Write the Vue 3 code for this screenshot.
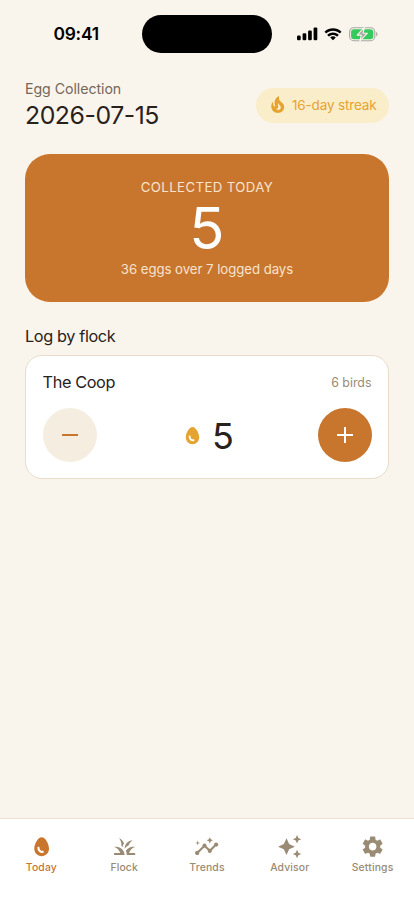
<script setup>
import { ref, computed } from 'vue'

const icons = {
  egg: 'M12 3C8.5 3 5 9.33 5 14c0 3.87 3.13 7 7 7s7-3.13 7-7c0-4.67-3.5-11-7-11zm1 15c-3 0-5-1.99-5-5 0-.55.45-1 1-1s1 .45 1 1c0 2.92 2.42 3 3 3 .55 0 1 .45 1 1s-.45 1-1 1z',
  grass: 'M12 20H2v-2h5.75C7.02 15.19 4.81 12.99 2 12.26 2.64 12.1 3.31 12 4 12c4.42 0 8 3.58 8 8zM22 12.26c-.64-.16-1.31-.26-2-.26-2.93 0-5.48 1.58-6.88 3.93.29.66.53 1.35.67 2.07.13.65.2 1.32.2 2h8v-2h-5.75c.74-2.81 2.95-5.01 5.76-5.74zM15.64 11.02c.78-2.09 2.23-3.84 4.09-5C15.44 6.16 12 9.67 12 14v.02c.95-1.27 2.2-2.3 3.64-3zM11.42 8.85C10.58 6.66 8.88 4.89 6.7 4 8.14 5.86 9 8.18 9 10.71c0 .21-.03.41-.04.61.43.24.83.52 1.22.82.11-1.14.55-2.25 1.24-3.29z',
  insights: 'M21 8c-1.45 0-2.26 1.44-1.93 2.51l-3.55 3.56c-.3-.09-.74-.09-1.04 0l-2.55-2.55C12.27 10.45 11.46 9 10 9c-1.45 0-2.27 1.44-1.93 2.52l-4.56 4.55C2.44 15.74 1 16.55 1 18c0 1.1.9 2 2 2 1.45 0 2.26-1.44 1.93-2.51l4.55-4.56c.3.09.74.09 1.04 0l2.55 2.55C12.73 16.55 13.54 18 15 18c1.45 0 2.27-1.44 1.93-2.52l3.56-3.55C21.56 12.26 23 11.45 23 10c0-1.1-.9-2-2-2zM15 9l.94-2.07L18 6l-2.06-.93L15 3l-.92 2.07L12 6l2.08.93zM3.5 11L4 9l2-.5L4 8l-.5-2L3 8l-2 .5L3 9z',
  sparkle: 'M19 9l1.25-2.75L23 5l-2.75-1.25L19 1l-1.25 2.75L15 5l2.75 1.25L19 9zm-7.5.5L9 4 6.5 9.5 1 12l5.5 2.5L9 20l2.5-5.5L17 12l-5.5-2.5zM19 15l-1.25 2.75L15 19l2.75 1.25L19 23l1.25-2.75L23 19l-2.75-1.25L19 15z',
  settings: 'M19.14 12.94c.04-.3.06-.61.06-.94 0-.32-.02-.64-.07-.94l2.03-1.58c.18-.14.23-.41.12-.61l-1.92-3.32c-.12-.22-.37-.29-.59-.22l-2.39.96c-.5-.38-1.03-.7-1.62-.94l-.36-2.54c-.04-.24-.24-.41-.48-.41h-3.84c-.24 0-.43.17-.47.41l-.36 2.54c-.59.24-1.13.57-1.62.94l-2.39-.96c-.22-.08-.47 0-.59.22L2.74 8.87c-.12.21-.08.47.12.61l2.03 1.58c-.05.3-.09.63-.09.94s.02.64.07.94l-2.03 1.58c-.18.14-.23.41-.12.61l1.92 3.32c.12.22.37.29.59.22l2.39-.96c.5.38 1.03.7 1.62.94l.36 2.54c.05.24.24.41.48.41h3.84c.24 0 .44-.17.47-.41l.36-2.54c.59-.24 1.13-.56 1.62-.94l2.39.96c.22.08.47 0 .59-.22l1.92-3.32c.12-.22.07-.47-.12-.61l-2.01-1.58zM12 15.6c-1.98 0-3.6-1.62-3.6-3.6s1.62-3.6 3.6-3.6 3.6 1.62 3.6 3.6-1.62 3.6-3.6 3.6z',
  fire: 'M19.48 12.35c-1.57-4.08-7.16-4.3-5.81-10.23.1-.44-.37-.78-.75-.55C9.29 3.71 6.68 8 8.87 13.62c.18.46-.36.89-.75.59-1.81-1.37-2-3.34-1.84-4.75.06-.52-.62-.77-.91-.34C4.69 10.16 4 11.84 4 14.37c.38 5.6 5.11 7.32 6.81 7.54 2.43.31 5.06-.14 6.95-1.87 2.08-1.93 2.84-5.01 1.72-7.69zm-9.28 5.03c1.44-.35 2.18-1.39 2.38-2.31.33-1.43-.96-2.83-.09-5.09.33 1.87 3.27 3.04 3.27 5.08.08 2.53-2.66 4.7-5.56 2.32z',
}

const tabs = [
  { label: 'Today', icon: 'egg' },
  { label: 'Flock', icon: 'grass' },
  { label: 'Trends', icon: 'insights' },
  { label: 'Advisor', icon: 'sparkle' },
  { label: 'Settings', icon: 'settings' },
]

const active = ref('Today')
const count = ref(5)
const total = computed(() => 31 + count.value)
</script>

<template>
  <div class="screen">
    <header class="status">
      <span class="clock">09:41</span>
      <div class="island"></div>
      <div class="indicators">
        <svg class="signal" viewBox="0 0 21 14">
          <rect x="0" y="8.6" width="3.7" height="4.6" rx="1.2" />
          <rect x="5.6" y="6.2" width="3.7" height="7" rx="1.2" />
          <rect x="11.1" y="3.5" width="3.7" height="9.7" rx="1.2" />
          <rect x="16.6" y="0.4" width="3.7" height="12.8" rx="1.2" />
        </svg>
        <svg class="wifi" viewBox="0 0 17 12">
          <path d="M8.5 2.4c2.4 0 4.6.9 6.2 2.5.1.1.3.1.4 0l1.2-1.2c.1-.1.1-.3 0-.5-4.3-4.1-11.3-4.1-15.6 0-.1.2-.1.4 0 .5l1.2 1.2c.1.1.3.1.4 0C3.9 3.3 6.1 2.4 8.5 2.4zm0 4c1.3 0 2.6.5 3.5 1.4.1.1.3.1.5 0l1.2-1.2c.1-.1.1-.3 0-.5-2.9-2.7-7.5-2.7-10.4 0-.1.2-.1.4 0 .5l1.2 1.2c.2.1.4.1.5 0 .9-.9 2.2-1.4 3.5-1.4zm2.4 2.7c.1-.1.1-.3 0-.5-1.4-1.2-3.4-1.2-4.8 0-.1.2-.1.4 0 .5l2.1 2.1c.2.2.4.2.6 0z" />
        </svg>
        <svg class="battery" viewBox="0 0 29 15">
          <rect x="0.6" y="0.7" width="25.2" height="13" rx="4.2" fill="none" stroke="#a9a8a2" stroke-width="1.1" />
          <rect x="2.1" y="2.2" width="22.2" height="10" rx="2.9" fill="#35ca5b" />
          <path d="M27.1 5v4.4c.8-.3 1.4-1.2 1.4-2.2S27.9 5.3 27.1 5z" fill="#a9a8a2" />
          <path d="M15.5.2L8.2 8.1h4.2l-1.6 6 7.6-7.9h-4.3z" fill="#a9a8a2" stroke="#faf5ec" stroke-width="1.1" stroke-linejoin="round" />
        </svg>
      </div>
    </header>

    <main class="content">
      <section class="heading">
        <div>
          <div class="eyebrow">Egg Collection</div>
          <h1 class="date">2026-07-15</h1>
        </div>
        <div class="streak">
          <svg class="fire" viewBox="0 0 24 24"><path :d="icons.fire" /></svg>
          <span>16-day streak</span>
        </div>
      </section>

      <section class="summary">
        <div class="caption">COLLECTED TODAY</div>
        <div class="total">{{ count }}</div>
        <div class="detail">{{ total }} eggs over 7 logged days</div>
      </section>

      <h2 class="section-title">Log by flock</h2>

      <article class="flock">
        <div class="flock-head">
          <span class="flock-name">The Coop</span>
          <span class="birds">6 birds</span>
        </div>
        <div class="stepper">
          <button class="round minus" aria-label="Remove egg" @click="count = Math.max(0, count - 1)">
            <svg viewBox="0 0 18 18"><path d="M1 9h16" /></svg>
          </button>
          <div class="amount">
            <svg class="egg" viewBox="0 0 24 24"><path :d="icons.egg" /></svg>
            <span class="number">{{ count }}</span>
          </div>
          <button class="round plus" aria-label="Add egg" @click="count++">
            <svg viewBox="0 0 18 18"><path d="M1 9h16M9 1v16" /></svg>
          </button>
        </div>
      </article>
    </main>

    <nav class="tabs">
      <a
        v-for="tab in tabs"
        :key="tab.label"
        class="tab"
        :class="{ active: tab.label === active }"
        @click="active = tab.label"
      >
        <svg viewBox="0 0 24 24"><path :d="icons[tab.icon]" /></svg>
        <span>{{ tab.label }}</span>
      </a>
    </nav>
  </div>
</template>

<style>
body {
  background: #faf5ec;
}
</style>

<style scoped>
.screen {
  box-sizing: border-box;
  display: flex;
  flex-direction: column;
  width: 414px;
  height: 900px;
  overflow: hidden;
  background: #faf5ec;
  color: #29211b;
  font-family: Inter, "Liberation Sans", sans-serif;
}
.status {
  box-sizing: border-box;
  display: grid;
  grid-template-columns: 142.4px 129.2px 1fr;
  align-items: center;
  height: 67px;
}
.clock {
  padding-left: 53.5px;
  color: #000;
  font-size: 17.4px;
  font-weight: 600;
  line-height: 22px;
  letter-spacing: -0.25px;
}
.island {
  height: 38px;
  border-radius: 19px;
  background: #000;
}
.indicators {
  display: flex;
  align-items: center;
  padding: 1px 0 0 25px;
}
.signal {
  width: 21px;
  height: 14px;
}
.wifi {
  width: 18px;
  height: 13px;
  margin-left: 6.4px;
}
.battery {
  width: 29px;
  height: 15px;
  margin-left: 6.8px;
}
.content {
  flex: 1;
  padding: 13px 25px 0;
}
.heading {
  display: flex;
  justify-content: space-between;
  align-items: center;
  height: 50px;
}
.eyebrow {
  padding-top: 2px;
  color: #75675a;
  font-size: 14.2px;
  line-height: 18px;
  letter-spacing: -0.06px;
}
.date {
  margin: 0;
  font-size: 24.8px;
  font-weight: 400;
  line-height: 34px;
  letter-spacing: -0.45px;
}
.streak {
  box-sizing: border-box;
  display: flex;
  align-items: center;
  gap: 4.5px;
  width: 133px;
  height: 35px;
  padding-left: 12px;
  border-radius: 18px;
  background: #faedc9;
  color: #e5a332;
  font-size: 13.5px;
  letter-spacing: -0.15px;
  white-space: nowrap;
}
.fire {
  width: 19.5px;
  height: 19.5px;
}
.summary {
  box-sizing: border-box;
  display: flex;
  flex-direction: column;
  align-items: center;
  height: 147.5px;
  margin-top: 24.2px;
  padding-top: 23px;
  border-radius: 25px;
  background: #c8762e;
  color: #fff;
}
.caption {
  color: #f8e3cd;
  font-size: 13.2px;
  line-height: 20px;
  letter-spacing: 0.42px;
}
.total {
  font-size: 58px;
  font-weight: 400;
  line-height: 62px;
}
.detail {
  color: #f8e3cd;
  font-size: 13.2px;
  line-height: 20px;
  letter-spacing: -0.04px;
}
.section-title {
  margin: 22.3px 0 7px;
  font-size: 16.3px;
  font-weight: 400;
  line-height: 24px;
  letter-spacing: -0.38px;
}
.flock {
  box-sizing: border-box;
  height: 124.5px;
  padding: 14.5px 16px 14.5px 16.5px;
  border: 1px solid #e8dccb;
  border-radius: 17px;
  background: #fff;
}
.flock-head {
  display: flex;
  justify-content: space-between;
  align-items: center;
  height: 23px;
}
.flock-name {
  font-size: 16.3px;
  letter-spacing: -0.38px;
}
.birds {
  padding: 1px 0.5px 0 0;
  color: #9a8b74;
  font-size: 12.4px;
}
.stepper {
  display: flex;
  justify-content: space-between;
  align-items: center;
  height: 54px;
  margin-top: 14.6px;
}
.round {
  display: flex;
  align-items: center;
  justify-content: center;
  width: 54px;
  height: 54px;
  padding: 0;
  border: 0;
  border-radius: 50%;
}
.round svg {
  width: 18px;
  height: 18px;
  fill: none;
  stroke: currentColor;
  stroke-width: 2;
}
.minus {
  background: #f5ede0;
  color: #c8762e;
}
.plus {
  background: #c8762e;
  color: #fff;
}
.amount {
  display: flex;
  align-items: center;
  gap: 8.5px;
}
.egg {
  width: 23px;
  height: 23px;
}
.number {
  padding-top: 1px;
  font-size: 36px;
  font-weight: 400;
  line-height: 46px;
}
.tabs {
  box-sizing: border-box;
  display: grid;
  grid-template-columns: repeat(5, 1fr);
  height: 82.5px;
  padding-top: 15.2px;
  border-top: 1px solid #f0dfd2;
  background: #fff;
}
.tab {
  display: flex;
  flex-direction: column;
  align-items: center;
  color: #9a8b74;
  font-size: 10.4px;
  font-weight: 500;
  line-height: 14px;
  letter-spacing: 0.15px;
}
.tab svg {
  width: 25.3px;
  height: 25.3px;
  margin-bottom: 2px;
}
.tab.active {
  color: #c8762e;
}
.tab svg,
.fire,
.signal,
.wifi {
  fill: currentColor;
}
.signal,
.wifi {
  color: #000;
}
.egg {
  fill: #e5a332;
}
</style>
